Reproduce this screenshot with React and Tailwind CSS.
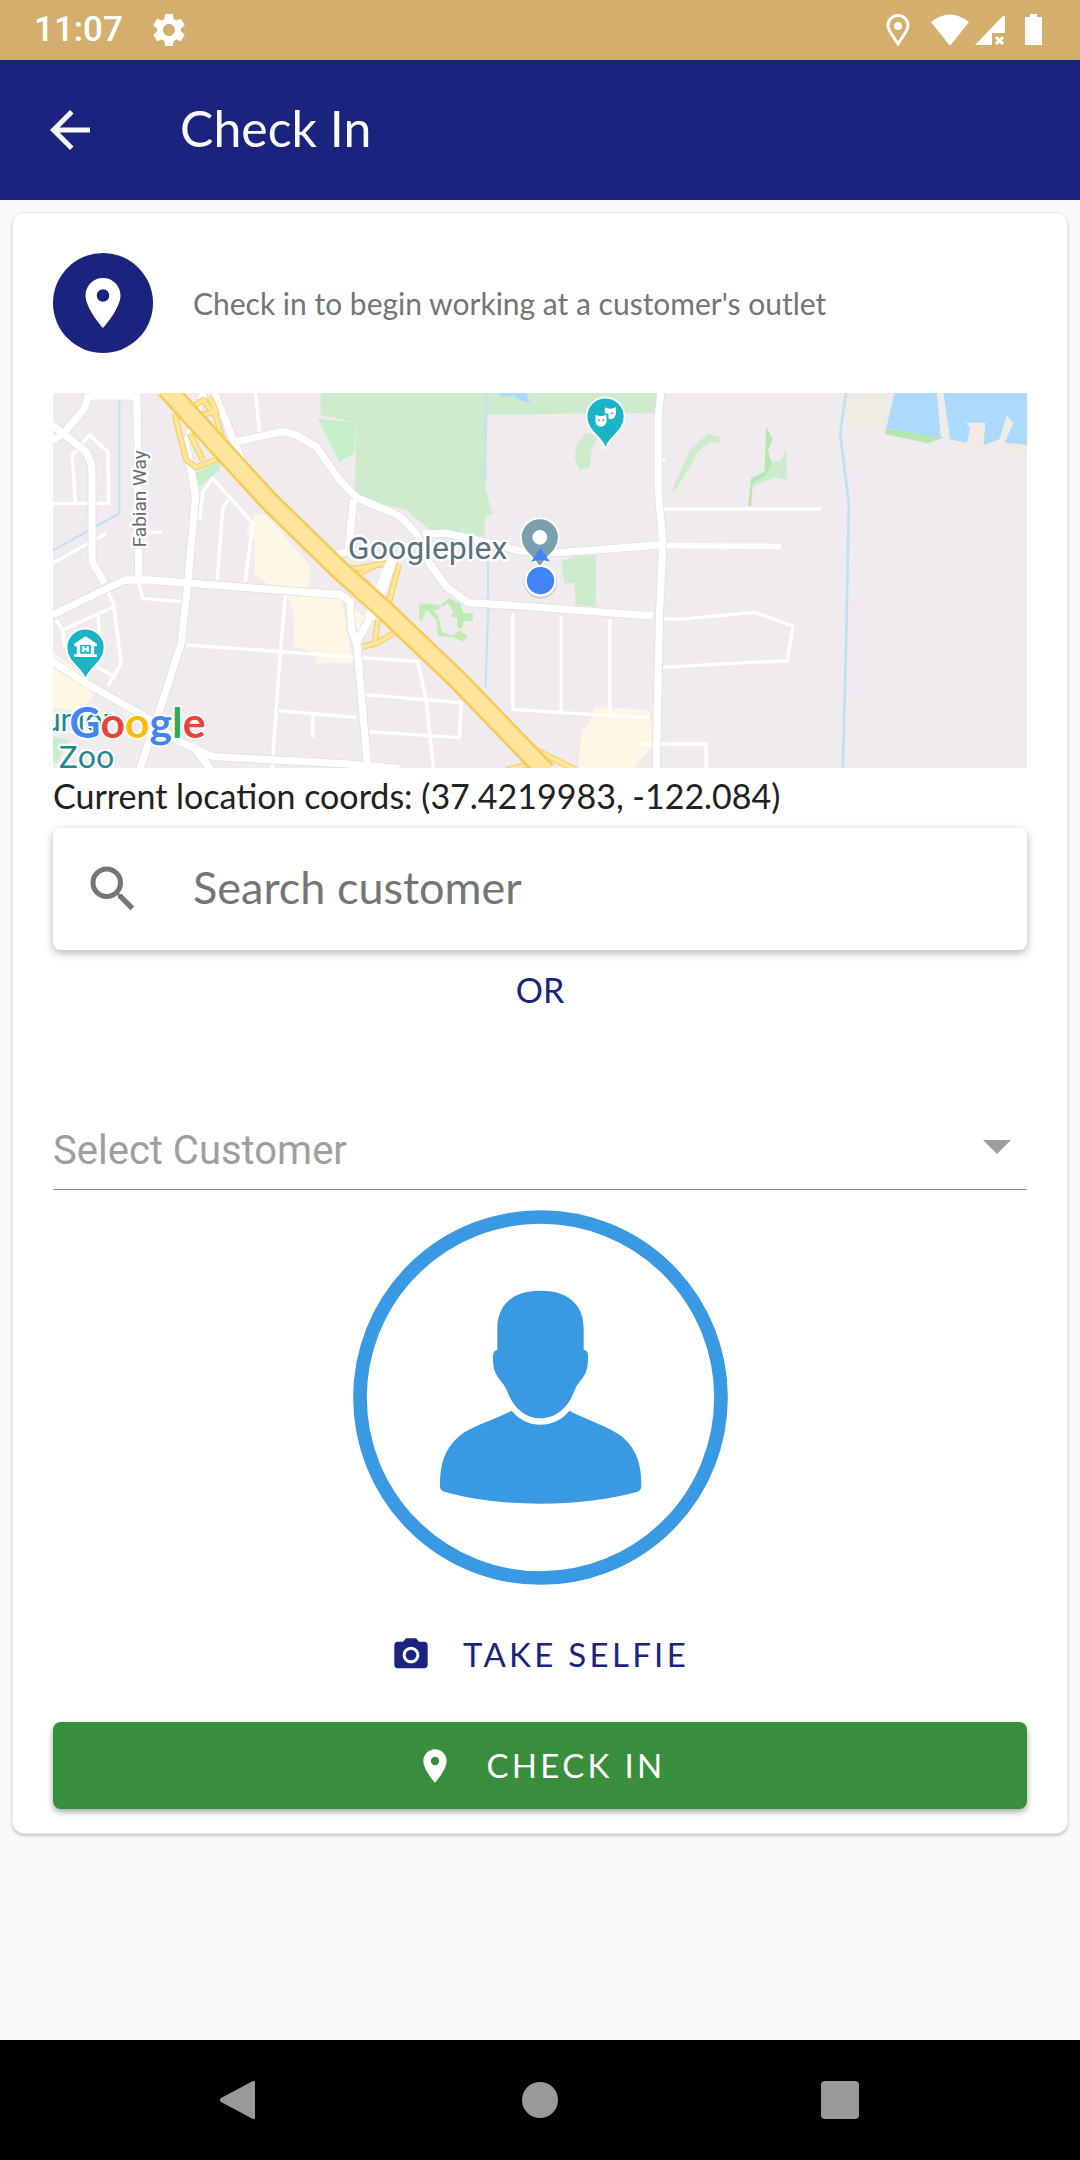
import React from 'react';
import { MdArrowBack, MdCameraAlt, MdPlace, MdSearch, MdSettings } from 'react-icons/md';

// Road centre lines, grouped by how wide they are drawn
const majorRoads = [
  'M39 182 L72 160 L135 85 L148 42',
  'M150 48 L290 48',
  'M39 135 L72 162 L140 215 L157 255 L158 545 L195 610',
  'M292 39 L298 600',
  'M39 705 L255 600 L330 600 L905 645 L932 665 L936 750 L952 790 L985 1170',
  'M492 39 L440 190 L468 350 L445 610 L425 790 L380 930 L300 1170',
  'M525 39 L590 200 L612 255',
  'M590 185 L730 155 L770 165 L830 200 L900 300 L950 352 L1080 408 L1130 460 L1170 550 L1220 620 L1285 668 L1400 675 L1840 708',
  'M942 360 L926 515 L870 525',
  'M1060 540 L985 725 L950 790',
  'M1150 462 L1220 460 L1290 475 L1440 512 L1560 518 L1860 495',
  'M39 845 L140 910 L300 1000 L420 1085 L520 1130 L900 1150 L1080 1165',
  'M470 1110 L515 1170',
  'M1864 39 L1856 110 L1856 330 L1870 490 L1860 700 L1850 1170',
];

const minorRoads = [
  'M108 370 L98 225 L150 165 L205 215 L208 370 L39 370',
  'M39 550 L200 460',
  'M298 610 L310 655 L425 665',
  'M480 420 L490 335 L520 295 L640 430 L617 605',
  'M565 360 L550 385 L533 600',
  'M648 39 L660 155',
  'M320 455 L368 458',
  'M200 625 L222 670 L245 850 L205 920',
  'M50 720 L70 750 L222 680',
  'M70 750 L75 800',
  'M175 700 L180 760',
  'M170 860 L222 888',
  'M440 795 L725 815 L930 830 L1135 845 L1160 960 L1182 1165',
  'M738 645 L722 820 L698 1165',
  'M718 992 L950 1012',
  'M820 1005 L820 1072',
  'M965 943 L1265 968 L1260 1073 L985 1055',
  'M1420 700 L1420 988 L1565 998 L1830 1013',
  'M1565 710 L1565 995',
  'M1711 718 L1711 1000',
  'M1870 242 L1878 242',
  'M1870 716 L1920 718 L2145 697 L2260 738 L2243 843 L2130 847 L1870 862',
  'M1800 1092 L2000 1092 L2000 1165',
];

const ramps = [
  'M405 100 L440 240 L470 262 L540 235',
  'M455 85 L490 60 L530 110 L555 200 L590 240',
  'M485 105 L530 95 L510 50',
  'M450 160 L490 240',
  'M920 570 L1075 545',
  'M940 590 L1020 550',
  'M985 600 L970 620 L1010 660',
  'M1078 555 L1045 680 L1110 760',
  'M970 800 L1010 790 L1080 750',
  'M1015 720 L1005 790',
  'M1490 1110 L1610 1170',
  'M1400 1170 L1500 1145',
];

function MapPin({ x, y, color, children }) {
  return (
    <g transform={`translate(${x} ${y})`}>
      <path
        d="M0 98 C-6 62 -57 46 -57 0 A57 57 0 1 1 57 0 C57 46 6 62 0 98Z"
        fill={color}
        stroke="#fff"
        strokeWidth="5"
      />
      {children}
    </g>
  );
}

function LocationMap() {
  return (
    <svg
      role="img"
      aria-label="Map of your current location"
      className="block w-full h-[375px] bg-[#efebee]"
      viewBox="39 39 2925 1125"
      preserveAspectRatio="xMidYMid slice"
    >
      {/* Parks */}
      <g fill="#ceebcd">
        <path d="M843 39 H1855 V98 L1345 104 L1336 320 L1360 402 L1336 408 L1336 470 L1180 455 L1100 390 L946 352 L950 130 L843 105Z" />
        <path d="M1640 160 L1675 165 L1655 220 L1650 262 L1620 270 L1605 235 L1612 190Z" />
        <path d="M1565 545 L1600 530 L1670 525 L1668 680 L1608 675 L1606 610 L1575 610Z" />
        <path d="M1900 320 L1930 260 L1950 210 L2005 162 L2040 170 L2038 188 L2010 188 L1975 215 L1950 260 L1912 325 L1902 335Z" />
        <path d="M2135 305 L2180 275 L2190 240 L2220 245 L2240 210 L2243 300 L2210 292 L2140 318Z" />
      </g>
      <g fill="#c5efc8">
        <path d="M835 115 L950 130 L944 220 L900 245Z" />
        <path d="M465 280 L540 245 L540 270 L480 320Z" />
        <path d="M39 1070 L90 1080 L50 1150 L39 1140Z" />
      </g>
      <g fill="#b5e6b4">
        <path d="M2180 140 L2200 178 L2185 210 L2195 250 L2180 285 L2140 310 L2135 378 L2126 378 L2135 295 L2175 275Z" />
        <path d="M2540 145 L2715 172 L2665 190 L2535 162Z" />
      </g>
      {/* Tree-lined paths south of the campus */}
      <g fill="#c0ebb4">
        <path d="M1140 670 L1200 675 L1200 688 L1180 692 L1196 705 L1206 755 L1240 768 L1258 750 L1284 768 L1270 785 L1245 772 L1195 768 L1190 718 L1160 690 L1148 720 L1138 718Z" />
        <path d="M1205 672 L1230 655 L1262 672 L1272 700 L1300 698 L1300 722 L1272 724 L1268 745 L1254 745 L1252 712 L1232 710 L1242 695 L1225 668 L1205 685Z" />
      </g>

      {/* Commercial blocks */}
      <g fill="#fef7e6">
        <path d="M650 400 L680 405 L815 560 L808 625 L685 612 L645 585 L645 480 L618 455Z" />
        <path d="M745 645 L905 650 L940 850 L830 850 L825 815 L765 800 L762 700Z" />
        <path d="M39 815 L180 920 L130 990 L39 985Z" />
        <path d="M1665 980 L1830 990 L1840 1100 L1780 1165 L1618 1165 L1625 1050 L1650 1030Z" />
        <path d="M935 680 L985 720 L960 770Z" />
      </g>

      {/* Bay and canals */}
      <path d="M2420 39 L2565 39 L2537 150 L2425 145Z M2690 39 H2964 V240 L2720 188Z" fill="#efece6" />
      <path d="M2565 39 L2692 39 L2704 172 L2540 145Z" fill="#abdafe" />
      <path d="M2712 39 H2964 V195 L2895 188 L2922 130 L2902 106 L2880 178 L2832 195 L2838 128 H2780 L2792 145 L2782 188 L2732 178Z" fill="#abdafe" />
      <path d="M1378 39 H1460 L1472 68 L1440 60 L1420 45 L1385 52Z" fill="#abdafe" />
      <g fill="none" stroke="#bfe2f3" strokeWidth="6">
        <path d="M240 50 L240 400 L39 512" />
        <path d="M1338 39 V300 M1345 510 L1346 700 L1338 920" />
        <path d="M2420 39 L2402 160 L2428 370 L2420 780 L2410 1165" strokeWidth="8" />
      </g>

      <g fill="none" stroke="#fff" strokeLinejoin="round">
        {minorRoads.map((d) => (
          <path key={d} d={d} strokeWidth="10" />
        ))}
        <path d="M1866 387 L2345 387" strokeWidth="11" />
        <path d="M1866 497 L2225 499" strokeWidth="16" />
      </g>
      <g fill="none" stroke="#dfdbe0" strokeLinejoin="round">
        {majorRoads.map((d) => (
          <path key={d} d={d} strokeWidth="26" />
        ))}
      </g>
      <g fill="none" stroke="#fff" strokeLinejoin="round">
        {majorRoads.map((d) => (
          <path key={d} d={d} strokeWidth="22" />
        ))}
      </g>

      {/* Freeway */}
      <g fill="none" stroke="#f7d26c" strokeLinejoin="round">
        {ramps.map((d) => (
          <path key={d} d={d} strokeWidth="19" />
        ))}
      </g>
      <g fill="none" stroke="#ffe69f" strokeLinejoin="round">
        {ramps.map((d) => (
          <path key={d} d={d} strokeWidth="11" />
        ))}
      </g>
      <path d="M1062 530 L990 715" fill="none" stroke="#fff" strokeWidth="30" />
      <path d="M380 25 L580 245 L690 365 L900 570 L1040 695 L1255 900 L1520 1175" fill="none" stroke="#f5cb5e" strokeWidth="64" />
      <path d="M380 25 L580 245 L690 365 L900 570 L1040 695 L1255 900 L1520 1175" fill="none" stroke="#ffe49b" strokeWidth="48" />

      {/* Place labels */}
      <g className="font-[Roboto,sans-serif]" stroke="#fff" strokeWidth="14" strokeLinejoin="round" paintOrder="stroke">
        <text x="0" y="0" transform="translate(320 502) rotate(-90)" fontSize="57" fill="#6a6a6e">
          Fabian Way
        </text>
        <text x="925" y="537" fontSize="96" fill="#5a7280">
          Googleplex
        </text>
        <text x="220" y="1053" fontSize="92" fill="#1c8a8c" textAnchor="end">
          Junior
        </text>
        <text x="58" y="1164" fontSize="96" fill="#1c8a8c">
          Zoo
        </text>
      </g>

      <MapPin x={138} y={803} color="#1bb4c6">
        <path
          d="M0 -34 L34 -12 V-4 H26 V20 H34 V28 H-34 V20 H-26 V-4 H-34 V-12Z M-16 -8 V18 H16 V-8Z M-10 -4 H-3 V2 H3 V-4 H10 V13 H3 V7 H-3 V13 H-10Z"
          fill="#fff"
          fillRule="evenodd"
        />
      </MapPin>
      <MapPin x={1698} y={110} color="#1bb4c6">
        <path d="M-2 -28 Q14 -20 31 -28 V-8 Q28 6 16 8 L9 6 V-8 L-2 -10Z" fill="#fff" />
        <path d="M-30 -6 Q-14 2 3 -6 V14 Q0 30 -14 30 Q-28 30 -30 14Z" fill="#fff" />
        <g fill="#1bb4c6">
          <circle cx="-20" cy="11" r="3" />
          <circle cx="-7" cy="11" r="3" />
          <circle cx="20" cy="-10" r="3" />
        </g>
      </MapPin>
      <MapPin x={1501} y={472} color="#78a0ae">
        <circle r="22" fill="#fff" />
      </MapPin>

      {/* Current position */}
      <path d="M1503 503 L1531 545 Q1502 535 1475 545Z" fill="#4284f5" />
      <circle cx="1503" cy="606" r="50" fill="#000" opacity="0.12" />
      <circle cx="1503" cy="602" r="48" fill="#fff" />
      <circle cx="1503" cy="602" r="41" fill="#4284f5" />

      <text x="90" y="1073" fontSize="128" fontWeight="700" stroke="#fff" strokeWidth="10" strokeLinejoin="round" paintOrder="stroke" className="font-[Lato,sans-serif]">
        <tspan fill="#4285f4">G</tspan>
        <tspan fill="#ea4335">o</tspan>
        <tspan fill="#fbbc05">o</tspan>
        <tspan fill="#4285f4">g</tspan>
        <tspan fill="#34a853">l</tspan>
        <tspan fill="#ea4335">e</tspan>
      </text>
    </svg>
  );
}

function StatusBar() {
  return (
    <div className="h-[60px] bg-[#d3ae6d] text-white pl-[34px] pr-[34px] flex items-center justify-between">
      <div className="flex items-center gap-[26px]">
        <span className="font-[Roboto,sans-serif] font-medium text-[35px] leading-[60px]">11:07</span>
        <MdSettings size={40} />
      </div>
      <div className="flex items-center">
        <svg className="w-6 h-8 mr-5" viewBox="0 0 24 32" fill="none">
          <path d="M12 30 C8 23 2 17 2 11.500 A10 10 0 0 1 22 11.500 C22 17 16 23 12 30Z" stroke="currentColor" strokeWidth="3" />
          <circle cx="12" cy="12" r="4" fill="currentColor" />
        </svg>
        <svg className="w-10 h-8 mr-1" viewBox="0 0 40 32" fill="currentColor">
          <path d="M1 8 Q20 -7 39 8 L21.500 30 Q20 32 18.500 30Z" />
        </svg>
        <svg className="w-8 h-8 mr-4" viewBox="0 0 32 32" fill="currentColor">
          <path d="M1 31 L28 3 Q31 0 31 3 V19 H18 V31Z" />
          <path d="M22 23 L29 30 M29 23 L22 30" stroke="currentColor" strokeWidth="3" />
        </svg>
        <svg className="w-6 h-8" viewBox="0 0 24 32" fill="currentColor">
          <path d="M8 0 H15 V3 H20 V31 H3 V3 H8Z" />
        </svg>
      </div>
    </div>
  );
}

function AppBar() {
  return (
    <header className="h-[140px] bg-[#1a237e] text-[#fafafa] px-10 flex items-center gap-20">
      <button type="button" aria-label="Back">
        <MdArrowBack size={60} />
      </button>
      <h1 className="text-[50px] leading-[60px] pb-1">Check In</h1>
    </header>
  );
}

function NavigationBar() {
  return (
    <nav className="h-[120px] bg-black text-[#999999] px-[90px] grid grid-cols-3 place-items-center">
      <button type="button" aria-label="Back">
        <svg className="w-10 h-10" viewBox="0 0 40 40" fill="currentColor">
          <path d="M33 1 Q35 0 35 3 V37 Q35 40 33 39 L1 22 Q-1 20 1 18Z" />
        </svg>
      </button>
      <button type="button" aria-label="Home" className="w-9 h-9 rounded-full bg-[#999999]" />
      <button type="button" aria-label="Recent apps" className="w-[38px] h-[38px] rounded-sm bg-[#999999]" />
    </nav>
  );
}

export default function App() {
  return (
    <div className="min-h-screen bg-[#f8f9fb] font-[Lato,sans-serif] flex flex-col">
      <StatusBar />
      <AppBar />

      <main className="flex-1 p-3">
        <section className="bg-white border border-[#e6e8ea] rounded-xl shadow-[0_2px_3px_rgba(0,0,0,0.2)] px-10 pt-10 pb-6">
          <div className="flex items-center gap-10 mb-10">
            <div className="w-[100px] h-[100px] rounded-full bg-[#1a237e] text-white flex items-center justify-center">
              <MdPlace size={60} />
            </div>
            <p className="text-[30px] leading-10 text-[#757575]">Check in to begin working at a customer's outlet</p>
          </div>

          <LocationMap />
          <p className="text-[34px] leading-[56px] pb-1 text-[#212121]">Current location coords: (37.4219983, -122.084)</p>

          {/* Search */}
          <label className="h-[122px] px-[30px] rounded-lg bg-white shadow-[0_3px_8px_rgba(0,0,0,0.3)] flex items-center gap-[50px] text-[#757575]">
            <MdSearch size={60} />
            <input
              type="text"
              aria-label="Search customer"
              placeholder="Search customer"
              className="flex-1 min-w-0 pb-1 text-[45px] leading-[60px] outline-none placeholder:text-[#757575]"
            />
          </label>
          <p className="text-center text-[34px] leading-[80px] text-[#1a237e]">OR</p>

          {/* Customer list */}
          <div className="relative mt-[70px] mb-5 border-b border-[#8f8f8f]">
            <select
              aria-label="Select Customer"
              defaultValue=""
              className="w-full h-[89px] pt-3 appearance-none bg-transparent font-[Roboto,sans-serif] text-[40px] leading-[60px] text-[#9e9e9e] outline-none"
            >
              <option value="">Select Customer</option>
            </select>
            <svg className="absolute right-4 top-10 w-7 h-3.5 pointer-events-none" viewBox="0 0 28 14" fill="#9e9e9e">
              <path d="M0 0 H28 L14 14Z" />
            </svg>
          </div>

          <svg className="block mx-auto w-[375px] h-[375px]" viewBox="39 60 1125 1125" role="img" aria-label="Selfie placeholder">
            <circle cx="601.500" cy="622.500" r="541.500" fill="none" stroke="#3999e3" strokeWidth="41" />
            <g fill="#3999e3">
              <path d="M601 302 C680 302 731 340 731 415 V480 C745 478 746 500 743 525 C738 565 715 572 704 600 C685 655 645 685 601 685 C557 685 520 655 500 600 C489 572 465 565 460 525 C457 500 459 478 472 480 V415 C472 340 523 302 601 302Z" />
              <path d="M515 662 C537 690 570 704 601 704 C633 704 667 690 688 662 C740 690 810 710 850 743 C890 778 905 825 904 890 Q903 902 890 906 Q760 941 601 941 Q440 941 315 906 Q301 902 300 890 C299 825 312 782 352 743 C395 705 462 692 515 662Z" />
            </g>
          </svg>

          <button type="button" className="w-full h-[87px] mt-[26px] flex items-center justify-center gap-8 text-[33px] tracking-widest text-[#1a237e]">
            <MdCameraAlt size={40} />
            TAKE SELFIE
          </button>
          <button type="button" className="w-full h-[87px] mt-6 rounded-lg bg-[#388e3c] shadow-[0_3px_6px_rgba(0,0,0,0.35)] flex items-center justify-center gap-8 text-[33px] tracking-widest text-white">
            <MdPlace size={40} />
            CHECK IN
          </button>
        </section>
      </main>

      <NavigationBar />
    </div>
  );
}
